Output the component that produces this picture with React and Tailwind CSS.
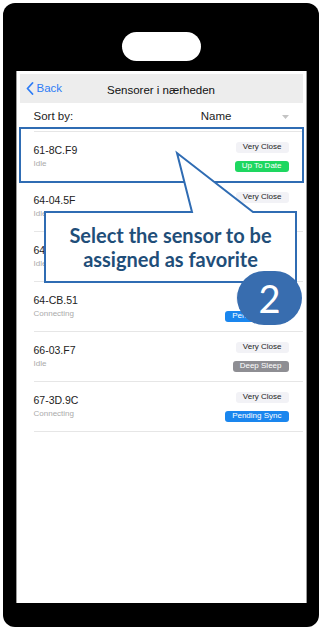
import React from 'react';

const sensors = [
  { id: '61-8C.F9', status: 'Idle', sync: 'Up To Date' },
  { id: '64-04.5F', status: 'Idle', sync: 'Deep Sleep' },
  { id: '64-2A.17', status: 'Idle', sync: 'Deep Sleep' },
  { id: '64-CB.51', status: 'Connecting', sync: 'Pending Sync' },
  { id: '66-03.F7', status: 'Idle', sync: 'Deep Sleep' },
  { id: '67-3D.9C', status: 'Connecting', sync: 'Pending Sync' },
];

const syncStyle = {
  'Up To Date': 'bg-[#1ed760] text-white',
  'Deep Sleep': 'bg-[#8e8e93] text-white',
  'Pending Sync': 'bg-[#1a86ee] text-white',
};

function Badge({ children, className }) {
  return (
    <span className={`h-[11px] px-[7px] rounded-[3px] flex items-center text-[8px] font-medium leading-none ${className}`}>
      {children}
    </span>
  );
}

function SensorRow({ sensor }) {
  return (
    <div className="h-[50px] ml-[14px] pr-[14px] border-b border-[#e6e6e6] flex items-center justify-between">
      <div className="flex flex-col">
        <span className="text-[10.5px] leading-[13px] text-[#222]">{sensor.id}</span>
        <span className="text-[8px] leading-[11px] text-[#aaaaaa] mt-[1px]">{sensor.status}</span>
      </div>
      <div className="flex flex-col items-end gap-[8px]">
        <Badge className="bg-[#f2f2f6] text-[#222]">Very Close</Badge>
        <Badge className={syncStyle[sensor.sync]}>{sensor.sync}</Badge>
      </div>
    </div>
  );
}

export default function App() {
  return (
    <div className="relative w-[322px] h-[630px] bg-white p-[3px]" style={{ fontFamily: '"Liberation Sans", Arial, sans-serif' }}>
      {/* Phone body */}
      <div className="h-full bg-black rounded-[12px] flex flex-col items-center">
        <div className="mt-[29px] w-[79px] h-[29px] rounded-full bg-white" />
        <div className="mt-[10px] w-[291px] h-[532px] bg-white border-x border-[#9a9a9a] px-[3px] pt-[3px]">
          {/* Nav bar */}
          <div className="h-[29px] bg-[#ededed] flex items-center relative">
            <div className="flex items-center pl-[6px] text-[#2d7cf6]">
              <svg width="8" height="13" viewBox="0 0 8 13" fill="none">
                <path d="M6.5 1 L1.5 6.5 L6.5 12" stroke="#2d7cf6" strokeWidth="1.8" strokeLinecap="round" strokeLinejoin="round" />
              </svg>
              <span className="ml-[3px] text-[11.5px]">Back</span>
            </div>
            <span className="absolute left-0 right-0 top-[9px] text-center text-[11.5px] leading-[14px] text-[#111] pointer-events-none">Sensorer i nærheden</span>
          </div>
          {/* Sort row */}
          <div className="h-[29px] ml-[14px] pr-[14px] border-b border-[#e6e6e6] flex items-center text-[11.5px] text-[#222]">
            <span>Sort by:</span>
            <span className="ml-auto mr-[50px]">Name</span>
            <svg width="7" height="4" viewBox="0 0 7 4">
              <path d="M0 0 L7 0 L3.5 4 Z" fill="#c4c4c4" />
            </svg>
          </div>
          {sensors.map((s) => (
            <SensorRow key={s.id} sensor={s} />
          ))}
        </div>
      </div>

      {/* Highlight around first row */}
      <div className="absolute left-[19px] top-[127px] w-[285px] h-[56px] border-2 border-[#2f6cb3]" />

      {/* Callout */}
      <svg className="absolute left-0 top-0 pointer-events-none" width="322" height="630">
        <path d="M45 212 L192 212 L177 153 L253 212 L296 212 L296 282 L45 282 Z" fill="white" stroke="#2f6cb3" strokeWidth="2" strokeLinejoin="miter" />
      </svg>
      <div className="absolute left-[45px] top-[212px] w-[251px] h-[70px] flex flex-col items-center justify-center text-[20px] leading-[24px] font-bold text-[#1f4e79]" style={{ fontFamily: 'Lato, "Open Sans", sans-serif' }}>
        <span>Select the sensor to be</span>
        <span>assigned as favorite</span>
      </div>

      {/* Step number */}
      <div className="absolute left-[237px] top-[271px] w-[65px] h-[54px] rounded-full bg-[#386daf] flex items-center justify-center text-white text-[38px] leading-none" style={{ fontFamily: 'Lato, "Open Sans", sans-serif' }}>
        2
      </div>
    </div>
  );
}
